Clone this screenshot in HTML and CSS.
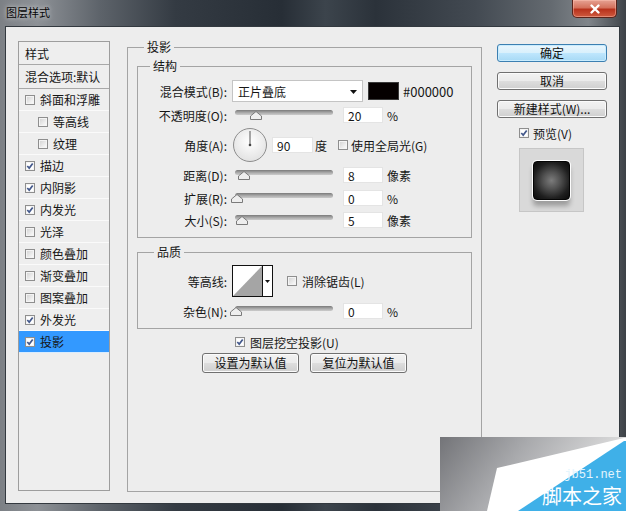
FILE: index.html
```html
<!DOCTYPE html>
<html>
<head>
  <meta charset="utf-8">
  <link rel="stylesheet" href="styles.css">
</head>
<body>
<div class="window">
  <div class="titlebar">
    <div class="title">图层样式</div>
    <div class="close">
      <svg width="14" height="12" viewBox="0 0 14 12"><path d="M3.5 2.5l7 7M10.5 2.5l-7 7"/></svg>
    </div>
  </div>

  <div class="client">
    <ul class="styles">
      <li class="head">样式</li>
      <li class="head blend">混合选项:默认</li>
      <li class="item"><span class="cb"></span>斜面和浮雕</li>
      <li class="item sub"><span class="cb"></span>等高线</li>
      <li class="item sub"><span class="cb"></span>纹理</li>
      <li class="item"><span class="cb on"><svg viewBox="0 0 8 8"><path d="M1.3 4l1.9 2.1 3.5-4.6"/></svg></span>描边</li>
      <li class="item"><span class="cb on"><svg viewBox="0 0 8 8"><path d="M1.3 4l1.9 2.1 3.5-4.6"/></svg></span>内阴影</li>
      <li class="item"><span class="cb on"><svg viewBox="0 0 8 8"><path d="M1.3 4l1.9 2.1 3.5-4.6"/></svg></span>内发光</li>
      <li class="item"><span class="cb"></span>光泽</li>
      <li class="item"><span class="cb"></span>颜色叠加</li>
      <li class="item"><span class="cb"></span>渐变叠加</li>
      <li class="item"><span class="cb"></span>图案叠加</li>
      <li class="item"><span class="cb on"><svg viewBox="0 0 8 8"><path d="M1.3 4l1.9 2.1 3.5-4.6"/></svg></span>外发光</li>
      <li class="item selected"><span class="cb on"><svg viewBox="0 0 8 8"><path d="M1.3 4l1.9 2.1 3.5-4.6"/></svg></span>投影</li>
    </ul>

    <fieldset class="panel">
      <legend>投影</legend>
      <div class="panel-body">
        <fieldset class="group structure">
          <legend>结构</legend>
          <div class="group-body">
            <div class="row">
              <span class="lbl">混合模式(B):</span>
              <div class="select">正片叠底
                <svg class="arrow" width="7" height="4" viewBox="0 0 7 4"><path d="M0 0h7L3.5 4z"/></svg>
              </div>
              <span class="swatch"></span>
              <span class="hex">#000000</span>
            </div>
            <div class="row">
              <span class="lbl">不透明度(O):</span>
              <div class="slider"><span class="track"></span><svg class="thumb" style="left:20%" width="12" height="9" viewBox="0 0 12 9"><path d="M6 .5l5.5 4.5v3.5H.5V5z"/></svg></div>
              <input class="num" value="20">
              <span class="unit">%</span>
            </div>
            <div class="row tall">
              <span class="lbl">角度(A):</span>
              <svg class="dial" width="36" height="36" viewBox="0 0 36 36">
                <defs>
                  <radialGradient id="dialFill" cx="50%" cy="40%" r="60%">
                    <stop offset="0" stop-color="#ffffff"/>
                    <stop offset="1" stop-color="#e2e2e2"/>
                  </radialGradient>
                </defs>
                <circle cx="18" cy="18" r="16.5" fill="url(#dialFill)" stroke="#8d8d8d"/>
                <path d="M18 4v14" stroke="#555" stroke-width="1"/>
                <circle cx="18" cy="18" r="1.3" fill="#444"/>
              </svg>
              <input class="num angle" value="90">
              <span class="deg">度</span>
              <span class="cb"></span>
              <span class="cb-text global">使用全局光(G)</span>
            </div>
            <div class="row">
              <span class="lbl">距离(D):</span>
              <div class="slider"><span class="track"></span><svg class="thumb" style="left:8%" width="12" height="9" viewBox="0 0 12 9"><path d="M6 .5l5.5 4.5v3.5H.5V5z"/></svg></div>
              <input class="num" value="8">
              <span class="unit">像素</span>
            </div>
            <div class="row short">
              <span class="lbl">扩展(R):</span>
              <div class="slider"><span class="track"></span><svg class="thumb" style="left:1%" width="12" height="9" viewBox="0 0 12 9"><path d="M6 .5l5.5 4.5v3.5H.5V5z"/></svg></div>
              <input class="num" value="0">
              <span class="unit">%</span>
            </div>
            <div class="row short">
              <span class="lbl">大小(S):</span>
              <div class="slider"><span class="track"></span><svg class="thumb" style="left:6%" width="12" height="9" viewBox="0 0 12 9"><path d="M6 .5l5.5 4.5v3.5H.5V5z"/></svg></div>
              <input class="num" value="5">
              <span class="unit">像素</span>
            </div>
          </div>
        </fieldset>

        <fieldset class="group quality">
          <legend>品质</legend>
          <div class="group-body">
            <div class="row tall">
              <span class="lbl">等高线:</span>
              <div class="contour">
                <svg class="curve" width="29" height="30" viewBox="0 0 29 30"><path d="M0 30L29 0v30z"/></svg>
                <span class="contour-drop"><svg width="5" height="3" viewBox="0 0 5 3"><path d="M0 0h5L2.5 3z"/></svg></span>
              </div>
              <span class="cb antialias"></span>
              <span class="cb-text">消除锯齿(L)</span>
            </div>
            <div class="row">
              <span class="lbl">杂色(N):</span>
              <div class="slider"><span class="track"></span><svg class="thumb" style="left:0%" width="12" height="9" viewBox="0 0 12 9"><path d="M6 .5l5.5 4.5v3.5H.5V5z"/></svg></div>
              <input class="num" value="0">
              <span class="unit">%</span>
            </div>
          </div>
        </fieldset>

        <div class="knockout">
          <span class="cb on"><svg viewBox="0 0 8 8"><path d="M1.3 4l1.9 2.1 3.5-4.6"/></svg></span>
          <span class="cb-text">图层挖空投影(U)</span>
        </div>
        <div class="defaults">
          <button class="btn">设置为默认值</button>
          <button class="btn">复位为默认值</button>
        </div>
      </div>
    </fieldset>

    <div class="side">
      <button class="btn primary">确定</button>
      <button class="btn">取消</button>
      <button class="btn">新建样式(W)...</button>
      <div class="preview-toggle">
        <span class="cb on"><svg viewBox="0 0 8 8"><path d="M1.3 4l1.9 2.1 3.5-4.6"/></svg></span>
        <span class="cb-text">预览(V)</span>
      </div>
      <div class="preview">
        <span class="sample"></span>
      </div>
    </div>
  </div>

  <div class="watermark">
    <svg width="186" height="74" viewBox="0 0 186 74">
      <defs>
        <linearGradient id="wmGray" x1="0" y1="0" x2="1" y2="0.3">
          <stop offset="0" stop-color="#737478"/>
          <stop offset="0.45" stop-color="#a9aaad"/>
          <stop offset="1" stop-color="#e4e4e4"/>
        </linearGradient>
      </defs>
      <rect width="186" height="74" fill="url(#wmGray)"/>
      <path d="M57 31L184 1h2v73H47z" fill="#ffffff"/>
      <path d="M184 4h2v70H78z" fill="#3fb0e8"/>
    </svg>
    <div class="wm-text">
      <span class="wm-url">jb51.net</span>
      <span class="wm-name">脚本之家</span>
    </div>
  </div>
</div>
</body>
</html>
```

FILE: styles.css
```css
* {
  box-sizing: border-box;
}

body {
  margin: 0;
  width: 626px;
  height: 511px;
  overflow: hidden;
  font-family: "Noto Sans CJK SC", "Liberation Sans", sans-serif;
  font-size: 12px;
  color: #161616;
}

.window {
  position: relative;
  width: 626px;
  height: 511px;
  display: flex;
  flex-direction: column;
  padding: 0 6px 7px 5px;
  background: linear-gradient(to right, #7c8085 0%, #8d9196 6%, #5d636a 16%, #343b43 28%, #272e36 45%, #3c444c 52%, #2b323a 60%, #434a52 76%, #646a70 88%, #80858a 94%, #3d4247 100%);
}

.titlebar {
  height: 26px;
  display: flex;
  align-items: flex-start;
  padding-left: 1px;
}

.title {
  margin-top: 4px;
  font-size: 11px;
  line-height: 16px;
  color: #050505;
  text-shadow: 0 0 4px rgba(255, 255, 255, 0.6), 0 0 9px rgba(255, 255, 255, 0.4);
}

.close {
  margin-left: auto;
  margin-right: 3px;
  width: 45px;
  height: 18px;
  border: 1px solid #5a231a;
  border-top: none;
  border-radius: 0 0 5px 5px;
  background: linear-gradient(#e6a293 0%, #d4715c 45%, #b8321c 55%, #cf5a3f 100%);
  box-shadow: inset 0 0 0 1px rgba(255, 200, 185, 0.45);
  display: flex;
  align-items: center;
  justify-content: center;
}

.close path {
  stroke: #ffffff;
  stroke-width: 2.4;
  stroke-linecap: round;
}

.client {
  flex: 1;
  display: flex;
  align-items: flex-start;
  border: 1px solid #33393f;
  background: #ededed;
  padding: 12px 0 0 12px;
}

/* style list */
.styles {
  list-style: none;
  margin: 2px 0 0;
  padding: 0;
  width: 92px;
  height: 450px;
  border: 1px solid #9d9d9d;
  background: #eeeeee;
}

.styles li {
  display: flex;
  align-items: center;
  padding-left: 6px;
  white-space: nowrap;
}

.styles .head {
  height: 23px;
  border-bottom: 1px solid #a8a8a8;
}

.styles .head.blend {
  height: 24px;
}

.styles .item {
  height: 22px;
  border-bottom: 1px solid #fafafa;
}

.styles .item .cb {
  margin-right: 5px;
}

.styles .item.sub {
  padding-left: 19px;
}

.styles .item.selected {
  background: #3399ff;
  border-bottom-color: #d8ecff;
}

/* checkbox */
.cb {
  width: 10px;
  height: 10px;
  flex-shrink: 0;
  border: 1px solid #8e8e8e;
  background: linear-gradient(135deg, #d0d0d0 0%, #ececec 60%, #ffffff 100%);
  box-shadow: inset 0 0 0 1px #f4f4f4;
  display: inline-flex;
}

.cb.on {
  background: #ffffff;
}

.cb svg {
  width: 8px;
  height: 8px;
}

.cb svg path {
  fill: none;
  stroke: #44598c;
  stroke-width: 1.7;
}

/* main panel */
fieldset {
  margin: 0;
  padding: 0;
  min-inline-size: 0;
  border: 1px solid #a4a4a4;
}

legend {
  padding: 0 3px;
  line-height: 16px;
  font-size: 12px;
}

.panel {
  margin-left: 17px;
  width: 355px;
  height: 453px;
}

.panel > legend {
  margin-left: 16px;
}

.panel-body {
  padding: 0 9px;
}

.group {
  margin-top: 3px;
}

.structure > legend {
  margin-left: 12px;
}

.quality {
  margin-top: 6px;
}

.quality > legend {
  margin-left: 16px;
}

.structure .group-body {
  padding: 5px 0 6px;
}

.quality .group-body {
  padding: 3px 0 5px;
}

.row {
  display: flex;
  align-items: center;
  height: 24px;
}

.row.tall {
  height: 36px;
}

.row.short {
  height: 22px;
}

.lbl {
  width: 89px;
  flex-shrink: 0;
  margin-right: 5px;
  text-align: right;
  white-space: nowrap;
}

.select {
  position: relative;
  width: 131px;
  height: 22px;
  display: flex;
  align-items: center;
  padding-left: 5px;
  background: #ffffff;
  border: 1px solid #c4c4c4;
}

.select .arrow {
  position: absolute;
  right: 5px;
  top: 9px;
}

.select .arrow path {
  fill: #111111;
}

.swatch {
  width: 31px;
  height: 18px;
  margin-left: 5px;
  background: #050000;
  border: 1px solid #3a3a3a;
}

.hex {
  margin-left: 4px;
  font-size: 13px;
}

.slider {
  position: relative;
  width: 98px;
  height: 16px;
  margin-left: 3px;
}

.slider .track {
  position: absolute;
  left: 0;
  right: 0;
  top: 3px;
  height: 5px;
  border-radius: 3px;
  background: linear-gradient(#7a7a7a, #b0b0b0 60%, #cbcbcb);
}

.slider .thumb {
  position: absolute;
  top: 4px;
  margin-left: -5px;
}

.slider .thumb path {
  fill: #eeeeee;
  stroke: #7a7a7a;
  stroke-width: 1;
}

.num {
  width: 40px;
  height: 16px;
  margin: 0 0 0 10px;
  padding: 0 0 0 4px;
  border: 1px solid #e4e4e4;
  background: #ffffff;
  font-family: "Noto Sans CJK SC", "Liberation Sans", sans-serif;
  font-size: 12px;
  line-height: 14px;
  color: #161616;
  outline: none;
}

.num.angle {
  width: 41px;
  margin-left: 4px;
}

.unit {
  margin-left: 4px;
}

.deg {
  margin: 0 11px 0 2px;
}

.cb-text {
  margin-left: 5px;
  white-space: nowrap;
}

.cb-text.global {
  margin-left: 3px;
}

.contour {
  width: 41px;
  height: 32px;
  display: flex;
  border: 1px solid #111111;
  background: #ffffff;
}

.contour .curve path {
  fill: #a5a5a5;
}

.contour-drop {
  flex: 1;
  border-left: 1px solid #111111;
  display: flex;
  align-items: center;
  justify-content: center;
}

.contour-drop path {
  fill: #111111;
}

.cb.antialias {
  margin-left: 14px;
}

.knockout {
  height: 18px;
  margin-top: 4px;
  padding-left: 98px;
  display: flex;
  align-items: center;
}

.defaults {
  margin-top: 2px;
  display: flex;
  justify-content: center;
  gap: 11px;
}

.defaults .btn {
  width: 97px;
  height: 20px;
}

/* buttons */
.btn {
  height: 18px;
  padding: 0;
  border: 1px solid #707070;
  border-radius: 3px;
  background: linear-gradient(#f2f2f2 0%, #ebebeb 48%, #dddddd 52%, #cfcfcf 100%);
  box-shadow: inset 0 0 0 1px #fbfbfb;
  font-family: "Noto Sans CJK SC", "Liberation Sans", sans-serif;
  font-size: 12px;
  line-height: 14px;
  color: #111111;
}

.btn.primary {
  border-color: #3c7fb1;
  background: linear-gradient(#eaf6fd 0%, #d9f0fc 48%, #bee6fd 52%, #a7d9f5 100%);
  box-shadow: inset 0 0 0 1px #c9ecfe;
}

.side {
  width: 110px;
  margin: 5px 0 0 15px;
  display: flex;
  flex-direction: column;
}

.side .btn {
  width: 110px;
  margin-bottom: 10px;
}

.preview-toggle {
  height: 18px;
  margin-top: -4px;
  padding-left: 22px;
  display: flex;
  align-items: center;
}

.preview-toggle .cb-text {
  margin-left: 4px;
}

.preview {
  width: 65px;
  height: 64px;
  margin: 6px 0 0 22px;
  background: #d9d9d9;
  border: 1px solid #c6c6c6;
  display: flex;
  justify-content: center;
  padding-top: 12px;
}

.sample {
  width: 37px;
  height: 39px;
  border-radius: 4px;
  border: 1px solid #050505;
  background: radial-gradient(circle at 50% 50%, #7c7c7c 0%, #505050 35%, #1f1f1f 70%, #0a0a0a 100%);
  box-shadow: 0 0 0 1px rgba(255, 255, 255, 0.95), 0 6px 5px rgba(0, 0, 0, 0.28);
}

/* watermark overlay */
.watermark {
  position: absolute;
  right: 0;
  bottom: 0;
  width: 186px;
  height: 74px;
}

.watermark svg {
  display: block;
}

.wm-text {
  position: absolute;
  right: 4px;
  bottom: 4px;
  display: flex;
  flex-direction: column;
  align-items: flex-end;
}

.wm-url {
  margin-bottom: 4px;
  font-family: "Liberation Mono", monospace;
  font-size: 12px;
  line-height: 12px;
  color: #e4f5fd;
}

.wm-name {
  font-family: "Noto Sans CJK SC", sans-serif;
  font-size: 20px;
  line-height: 22px;
  color: #ffffff;
  white-space: nowrap;
}
```
